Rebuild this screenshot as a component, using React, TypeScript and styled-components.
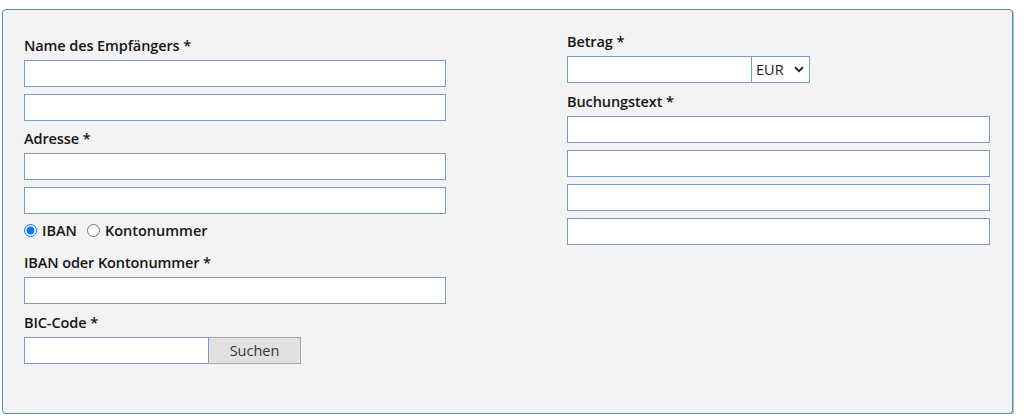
import React from "react";
import styled, { createGlobalStyle } from "styled-components";

const GlobalStyle = createGlobalStyle`
  html, body { margin: 0; padding: 0; background: #ffffff; }
  body { font-family: "Open Sans", "Noto Sans", Arial, sans-serif; color: #1b1b1b; }
  * { box-sizing: border-box; }
`;

const Panel = styled.form`
  margin: 9px 10px 0 2px;
  width: 1011px;
  height: 405px;
  background: #f3f3f3;
  border: 1px solid #5f88b8;
  border-radius: 4px;
  box-shadow: 1px 1px 0 #a9c0da;
  padding: 22px 21px 0 21px;
  display: flex;
  gap: 121px;
`;

const Column = styled.div<{ $width: number; $offset?: number }>`
  width: ${(p) => p.$width}px;
  padding-top: ${(p) => p.$offset ?? 0}px;
  display: flex;
  flex-direction: column;
`;

const Label = styled.label<{ $first?: boolean; $after?: number }>`
  display: block;
  font-size: 14.5px;
  font-weight: 600;
  line-height: 20px;
  height: 20px;
  margin-top: ${(p) => (p.$first ? 0 : p.$after ?? 9)}px;
  margin-bottom: 4px;
  white-space: nowrap;
  letter-spacing: -0.1px;
  color: #161616;
`;

const TextInput = styled.input`
  display: block;
  width: 100%;
  height: 27px;
  border: 1px solid #7a9bc4;
  background: #ffffff;
  padding: 2px 4px;
  font: 14px "Open Sans", sans-serif;
  outline: none;
  & + & { margin-top: 7px; }
`;

const RadioRow = styled.div`
  display: flex;
  align-items: center;
  gap: 10px;
  height: 20px;
  margin-top: 6px;
  font-size: 14.5px;
  font-weight: 600;
  color: #161616;
`;

const RadioOption = styled.label`
  display: inline-flex;
  align-items: center;
  input {
    width: 13px;
    height: 13px;
    margin: 0 5px 0 0;
    accent-color: #0075ff;
  }
`;

const InlineGroup = styled.div`
  display: flex;
  align-items: stretch;
  height: 27px;
`;

const FixedInput = styled(TextInput)<{ $w: number }>`
  width: ${(p) => p.$w}px;
  flex: none;
`;

const SearchButton = styled.button`
  width: 93px;
  height: 27px;
  margin-left: -1px;
  background: #e1e1e1;
  border: 1px solid #a7a7a7;
  border-left-color: #7a9bc4;
  font: 14.5px "Open Sans", sans-serif;
  color: #333;
  padding: 0 0 1px 0;
  cursor: pointer;
`;

const SelectWrap = styled.div`
  position: relative;
  width: 59px;
  height: 27px;
  margin-left: -1px;
`;

const Select = styled.select`
  appearance: none;
  width: 100%;
  height: 100%;
  border: 1px solid #7a9bc4;
  background: #ffffff;
  font: 14.5px "Open Sans", sans-serif;
  color: #1b1b1b;
  padding: 0 0 0 4px;
  outline: none;
  border-radius: 0;
`;

const Chevron = styled.svg`
  position: absolute;
  right: 6px;
  top: 10px;
  pointer-events: none;
`;

export default function App() {
  return (
    <>
      <GlobalStyle />
      <Panel>
        <Column $width={422} $offset={4}>
          <Label $first>Name des Empfängers *</Label>
          <TextInput />
          <TextInput />
          <Label $after={8}>Adresse *</Label>
          <TextInput />
          <TextInput />
          <RadioRow>
            <RadioOption>
              <input type="radio" name="kind" defaultChecked />
              IBAN
            </RadioOption>
            <RadioOption>
              <input type="radio" name="kind" />
              Kontonummer
            </RadioOption>
          </RadioRow>
          <Label $after={13}>IBAN oder Kontonummer *</Label>
          <TextInput />
          <Label>BIC-Code *</Label>
          <InlineGroup>
            <FixedInput $w={185} />
            <SearchButton type="button">Suchen</SearchButton>
          </InlineGroup>
        </Column>
        <Column $width={423}>
          <Label $first>Betrag *</Label>
          <InlineGroup>
            <FixedInput $w={185} />
            <SelectWrap>
              <Select defaultValue="EUR">
                <option>EUR</option>
                <option>USD</option>
                <option>CHF</option>
              </Select>
              <Chevron width="10" height="7" viewBox="0 0 10 7">
                <path d="M1 1.2 L5 5.2 L9 1.2" fill="none" stroke="#1b1b1b" strokeWidth="1.8" />
              </Chevron>
            </SelectWrap>
          </InlineGroup>
          <Label $after={9}>Buchungstext *</Label>
          <TextInput />
          <TextInput />
          <TextInput />
          <TextInput />
        </Column>
      </Panel>
    </>
  );
}
